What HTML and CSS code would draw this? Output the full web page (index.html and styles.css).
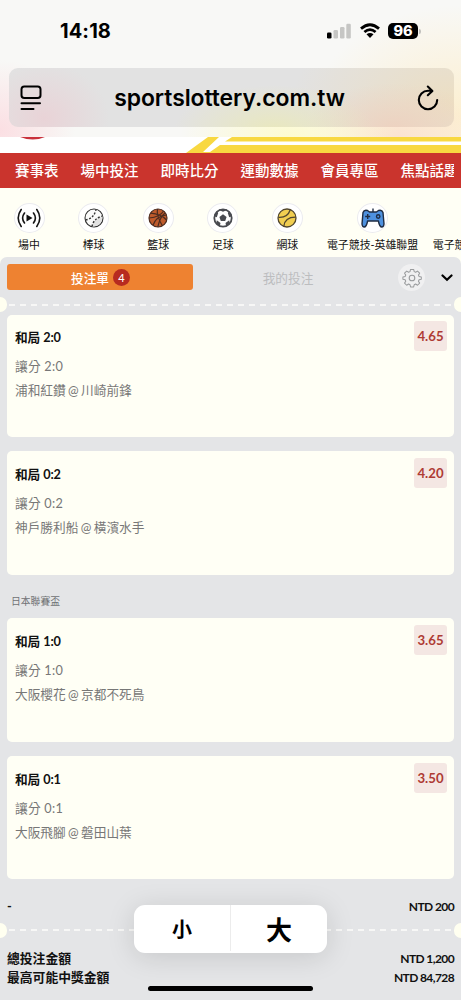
FILE: index.html
```html
<!DOCTYPE html>
<html lang="zh-Hant">
<head>
<meta charset="utf-8">
<title>sportslottery.com.tw</title>
<link rel="stylesheet" href="styles.css">
</head>
<body>
<div class="screen">
  <header class="browser">
    <div class="status">
      <span class="clock">14:18</span>
      <div class="indicators">
        <svg class="signal" width="24" height="16" viewBox="0 0 24 16"><rect x="0" y="9.5" width="4.5" height="6" rx="1.3"/><g fill="#c6c6c4"><rect x="6.5" y="7" width="4.5" height="8.5" rx="1.3"/><rect x="13" y="4" width="4.5" height="11.5" rx="1.3"/><rect x="19.3" y="0.7" width="4.5" height="14.8" rx="1.3"/></g></svg>
        <svg class="wifi" width="22" height="16" viewBox="0 0 22 16"><path d="M2 5.6Q11-2.2 20 5.6M5.4 9Q11 4.2 16.6 9" fill="none" stroke="#000" stroke-width="2.8"/><path d="M7.5 11.3Q11 8.5 14.5 11.3L11 15Z"/></svg>
        <span class="battery">96</span><i class="cap"></i>
      </div>
    </div>
    <div class="address">
      <svg width="22" height="26" viewBox="0 0 22 26" fill="none" stroke="#000" stroke-width="2" stroke-linecap="round"><rect x="1.5" y="1.5" width="19" height="11.5" rx="2.8"/><path d="M1.5 18.2h18.5M1.5 24h12"/></svg>
      <span class="url">sportslottery.com.tw</span>
      <svg width="22" height="26" viewBox="0 0 22 26" fill="none" stroke="#000" stroke-width="2.1" stroke-linecap="round" stroke-linejoin="round"><path d="M15.2 5.8H11A9.2 9.2 0 1 0 20.2 15M10.8 1.5l4.6 4.4-4.6 4.3"/></svg>
    </div>
  </header>
  <svg class="banner" width="461" height="16" viewBox="0 0 461 16"><rect width="461" height="16" fill="#fff"/><path d="M20 0Q33 5 45 0" fill="#c9303b"/><path d="M208 0H461V16H186Z" fill="#f8d841"/><path d="M219 0H232L225 4.5H461V8H220L210 15H203Z" fill="#fff"/></svg>
  <nav class="nav"><span>賽事表</span><span>場中投注</span><span>即時比分</span><span>運動數據</span><span>會員專區</span><span>焦點話題</span></nav>
  <div class="sports">
    <div class="sport"><div class="disc"><svg width="24" height="22" viewBox="0 0 24 22" fill="none" stroke="#141414" stroke-width="1.6" stroke-linecap="round"><path d="M9.5 7.5v7l6-3.5z" fill="#111" stroke="none"/><path d="M7.5 6Q3.7 11 7.5 16M4.2 2.5Q-1.8 11 4.2 19.5M16.5 6Q20.3 11 16.5 16M19.8 2.5Q25.8 11 19.8 19.5"/></svg></div>場中</div>
    <div class="sport"><div class="disc"><svg width="20" height="20" viewBox="0 0 20 20" fill="none" stroke="#333" stroke-width="1.1"><circle cx="10" cy="10" r="9" fill="#fafafa"/><path d="M18.6 8Q18 19 8 18.5Q9 11 18.6 8" fill="#e2e2e2" stroke="none"/><path d="M1.5 12Q10 10.5 12 1.5M8 18.5Q9.5 10.5 18.5 8" stroke-width="1.4" stroke-dasharray="2 1.6"/></svg></div>棒球</div>
    <div class="sport"><div class="disc"><svg width="20" height="20" viewBox="0 0 20 20" fill="none" stroke="#4c2c20" stroke-width="1.2"><circle cx="10" cy="10" r="9" fill="#bf5b2c"/><path d="M1.2 10Q12 9 15.6 3M5 17.3Q8 8 18.5 7M9.5 1Q8 7 14.5 18M2.5 5.2Q13 6 18.5 12M9.8 19Q12 9 17 5"/></svg></div>籃球</div>
    <div class="sport"><div class="disc"><svg width="20" height="20" viewBox="0 0 20 20"><circle cx="10" cy="10" r="8.7" fill="#fff" stroke="#494b50" stroke-width="1.8"/><g fill="#494b50"><path d="M10 6.3l3.6 2.6-1.4 4.2H7.8L6.4 8.9zM6 2l4 1.8L14 2l-.8-1H6.8zM1 8.3l2.8 1L5.2 5 4 3.5Q1 6 1 8.3M19 8.3l-2.8 1L14.8 5 16 3.5Q19 6 19 8.3M3.3 15.7l.5-3.5L7.5 15l-.7 3.3Q4 17 3.3 15.7M16.7 15.7l-.5-3.5-3.7 2.8.7 3.3Q16 17 16.7 15.7"/></g></svg></div>足球</div>
    <div class="sport"><div class="disc"><svg width="20" height="20" viewBox="0 0 20 20" fill="none" stroke="#51462e" stroke-width="1.3"><circle cx="10" cy="10" r="9" fill="#f1ce51"/><path d="M1.4 9.3Q10.5 10 13.3 1.7M6.8 18.3Q8 9 18.7 9.2"/></svg></div>網球</div>
    <div class="sport"><div class="disc"><svg width="24" height="22" viewBox="0 0 24 22" fill="none" stroke="#1f2c43" stroke-width="1.4" stroke-linejoin="round"><path d="M12 6V1.5"/><path d="M2 5.5Q3 2.5 6.5 3.5L8.5 5h7l2-1.5Q21 2.5 22 5.5L23 17q-.3 3-2.2 3Q18.5 20 17.4 14H6.6Q5.5 20 3.2 20 1.3 20 1 17z" fill="#4e91df"/><path d="M4.2 9.5h5M6.7 7v5"/><circle cx="17.2" cy="9.5" r="1.7"/></svg></div>電子競技-英雄聯盟</div>
    <div class="sport last"><div class="disc blank"></div>電子競技</div>
  </div>
  <main class="slip">
    <div class="tabs">
      <div class="tab active">投注單<span class="count">4</span></div>
      <div class="tab">我的投注</div>
      <div class="gear"><svg width="20" height="20" viewBox="0 0 20 20" fill="none" stroke="#999b9d" stroke-width="1.1" stroke-linejoin="round"><path d="M8.3 1h3.4l.6 2.4 1.5.7 2.1-1.3 2.3 2.3-1.3 2.1.7 1.5 2.4.6v2.4l-2.4.6-.7 1.5 1.3 2.1-2.3 2.3-2.1-1.3-1.5.7-.6 2.4H8.3l-.6-2.4-1.5-.7-2.1 1.3-2.3-2.3 1.3-2.1-.7-1.5L0 11.7V9.3l2.4-.6.7-1.5-1.3-2.1 2.3-2.3 2.1 1.3 1.5-.7z" transform="translate(.9 .5) scale(.92)"/><circle cx="10" cy="10" r="2.8"/></svg></div>
      <svg class="chevron" width="12" height="8" viewBox="0 0 12 8"><path d="M1.5 1.5L6 5.7l4.5-4.2" fill="none" stroke="#000" stroke-width="2.2" stroke-linecap="round"/></svg>
    </div>
    <div class="perforation"><i></i></div>
    <div class="bets">
      <article class="bet first"><div class="pick"><b>和局 2:0</b><p class="line">讓分 2:0</p><p class="teams">浦和紅鑽 @ 川崎前鋒</p></div><span class="odds">4.65</span></article>
      <article class="bet"><div class="pick"><b>和局 0:2</b><p class="line">讓分 0:2</p><p class="teams">神戶勝利船 @ 橫濱水手</p></div><span class="odds">4.20</span></article>
      <h2 class="league">日本聯賽盃</h2>
      <article class="bet"><div class="pick"><b>和局 1:0</b><p class="line">讓分 1:0</p><p class="teams">大阪櫻花 @ 京都不死鳥</p></div><span class="odds">3.65</span></article>
      <article class="bet"><div class="pick"><b>和局 0:1</b><p class="line">讓分 0:1</p><p class="teams">大阪飛腳 @ 磐田山葉</p></div><span class="odds">3.50</span></article>
    </div>
    <div class="row stake"><span>-</span><span>NTD 200</span></div>
    <div class="perforation"><i></i></div>
    <div class="totals">
      <div class="row"><span>總投注金額</span><span>NTD 1,200</span></div>
      <div class="row"><span>最高可能中獎金額</span><span>NTD 84,728</span></div>
    </div>
  </main>
  <div class="sizer"><span class="small">小</span><span class="large">大</span></div>
  <div class="home"></div>
</div>
</body>
</html>
```
FILE: styles.css
```css
* { box-sizing: border-box; }
body { margin: 0; font-family: Lato, "Noto Sans CJK TC", sans-serif; color: #111; }
p, h2 { margin: 0; }
svg { display: block; flex: none; }
.screen { position: relative; width: 461px; height: 1000px; overflow: hidden; background: #fffff5; }

.browser {
  height: 137px; padding: 17px 9px 0;
  font-family: Inter, sans-serif; color: #000;
  background:
    radial-gradient(ellipse 75px 70px at 0 130px, #fbdfe3, transparent),
    radial-gradient(ellipse 110px 50px at 290px 137px, #fdfbd0, transparent),
    radial-gradient(ellipse 90px 45px at 395px 137px, #fbe2cf, transparent),
    radial-gradient(ellipse 150px 110px at 461px 115px, #fcefd0, transparent),
    #f8f8f6;
}
.status { height: 28px; padding: 0 31px 0 51px; display: flex; align-items: center; justify-content: space-between; }
.clock { font-size: 20px; font-weight: 700; letter-spacing: .1px; }
.indicators { display: flex; align-items: center; }
.wifi { margin: 0 7px 0 8px; }
.battery { width: 30px; height: 16px; border-radius: 5px; background: #000; color: #fff; font-size: 14.5px; line-height: 16px; font-weight: 800; text-align: center; }
.cap { width: 2px; height: 5px; margin-left: 1px; border-radius: 0 2px 2px 0; background: #c2c1bd; }
.address {
  height: 59px; margin: 23px -2px 0 0; padding: 0 15px 0 11px; border-radius: 9px;
  display: flex; align-items: center; justify-content: space-between;
  background:
    radial-gradient(ellipse 65px 55px at 35px 50px, #e9d3d7, transparent),
    radial-gradient(ellipse 100px 45px at 265px 62px, #e9e8be, transparent),
    radial-gradient(ellipse 90px 45px at 385px 60px, #edd2c0, transparent),
    radial-gradient(ellipse 160px 100px at 443px 35px, #ecdec2, transparent),
    #e2e2e2;
}
.url { font-size: 22.9px; font-weight: 600; letter-spacing: -.05px; }

.nav { height: 35px; padding: 0 7px 0 15px; display: flex; gap: 22px; align-items: center; background: #ca342d; border-right: 7px solid #ca342d; overflow: hidden; white-space: nowrap; color: #fff; font-size: 14.5px; font-weight: 500; line-height: 35px; }
.nav span { flex: none; }

.sports { height: 69px; padding: 15px 0 0 4px; display: flex; gap: 14.6px; overflow: hidden; font-size: 10.9px; line-height: 16px; white-space: nowrap; }
.sport { flex: none; min-width: 50px; display: flex; flex-direction: column; align-items: center; gap: 4px; }
.sport.last { min-width: 0; }
.disc { width: 31px; height: 30px; display: flex; align-items: center; justify-content: center; border-radius: 50%; background: #fff; border: 1px solid #ebebef; }
.blank { visibility: hidden; }

.slip { height: 743px; border-radius: 7px 7px 0 0; background: #e4e5e7; }
.tabs { height: 40px; padding: 7px 8px 0 7px; display: flex; align-items: flex-start; }
.tab { height: 26px; width: 190px; display: flex; align-items: center; justify-content: center; color: #bcbdbf; font-size: 12.7px; }
.tab.active { width: 186px; padding-left: 1px; gap: 4px; border-radius: 3px; background: #ee8231; color: #fff; font-weight: 500; }
.count { width: 17px; height: 17px; border-radius: 50%; background: #b72b20; font-size: 11px; line-height: 17px; text-align: center; }
.gear { width: 27px; height: 27px; margin-left: 15px; border-radius: 50%; background: #f0f0f1; display: flex; align-items: center; justify-content: center; }
.chevron { margin: 10px 0 0 16px; }

.perforation { height: 15px; display: flex; align-items: center; justify-content: space-between; }
.perforation::before, .perforation::after { content: ""; width: 7px; height: 15px; background: #fffff0; }
.perforation::before { border-radius: 0 8px 8px 0; }
.perforation::after { border-radius: 8px 0 0 8px; }
.perforation i { flex: 1; height: 2px; margin: 0 1px 0 2px; background: repeating-linear-gradient(90deg, #f7f7f6 0 6px, transparent 6px 10.9px); }

.bets { padding: 3px 7px 0; display: flex; flex-direction: column; }
.bet { height: 123.5px; margin-bottom: 14px; padding: 7px 8px 0; display: flex; justify-content: space-between; border-radius: 5px; background: #fffff5; font-size: 12.7px; }
.bet.first { height: 122px; padding-top: 6px; }
.pick { padding-top: 7px; line-height: 18px; color: #777; }
.pick b { display: block; color: #111; margin-bottom: 11px; letter-spacing: -.1px; }
.line { letter-spacing: .25px; }
.teams { margin-top: 6px; word-spacing: -.9px; }
.odds { width: 33px; height: 30px; margin-right: -1px; border-radius: 3px; background: #f4e7e3; color: #ae3b34; font-size: 13.2px; font-weight: 700; line-height: 31px; text-align: center; }
.league { height: 29.5px; padding: 3px 4px 0; font-size: 9.8px; font-weight: 400; line-height: 18px; color: #707275; }

.row { display: flex; justify-content: space-between; padding: 0 7px; font-size: 12.8px; font-weight: 700; line-height: 19px; }
.row span:last-child { font-size: 12px; letter-spacing: -.6px; }
.stake { height: 29.5px; padding-top: 4px; }
.totals { padding-top: 11px; }

.sizer { position: absolute; left: 134px; top: 905px; width: 193px; height: 48px; padding-bottom: 2px; display: flex; border-radius: 11px; background: #fff; box-shadow: 0 4px 28px rgba(0,0,0,.13); font-weight: 700; color: #000; }
.sizer span { flex: 1; display: flex; align-items: center; justify-content: center; }
.small { font-size: 20px; }
.large { font-size: 26px; border-left: 1px solid #ececec; }
.home { position: absolute; left: 148px; top: 986px; width: 165px; height: 5px; border-radius: 3px; background: #000; }
```
